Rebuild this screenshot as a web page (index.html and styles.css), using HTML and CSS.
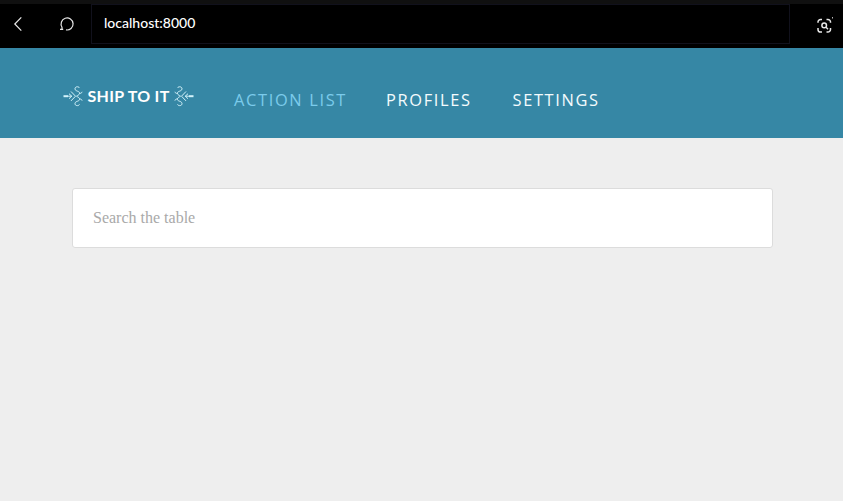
FILE: index.html
```html
<!DOCTYPE html>
<html lang="en">
<head>
<meta charset="utf-8">
<title>Ship To It</title>
<link rel="stylesheet" href="styles.css">
</head>
<body>
<div class="browser">
  <button class="tool back" aria-label="Back"><svg width="10" height="16" viewBox="0 0 10 16"><path d="M8.300 1.300 1.800 8l6.500 6.700"/></svg></button>
  <button class="tool reload" aria-label="Reload"><svg width="16" height="16" viewBox="0 0 16 16"><path d="M7 13.900A6 6 0 1 0 3 11.200v2M1 13.300h3.200"/></svg></button>
  <div class="address">localhost:8000</div>
  <button class="tool lens" aria-label="Visual search"><svg width="18" height="18" viewBox="0 0 18 18"><path d="M2 5.700V5a2.600 2.600 0 0 1 2.600-2.600H6M10.500 2.400h1.400A2.600 2.600 0 0 1 14.500 5v.7M14.500 11v1.400a2.600 2.600 0 0 1-2.600 2.600h-1.400M6 15H4.600A2.600 2.600 0 0 1 2 12.400V11M16 .8h.8"/><circle cx="8.200" cy="8.400" r="2.300"/><path d="m10 10.200 2 2"/></svg></button>
</div>
<header class="site-header">
  <a class="logo">
    <svg class="flourish" width="20" height="24" viewBox="0 0 20 24"><path class="bar" d="M.5 12.200H5"/><path d="M5 12.200h4M6 9.700l2.700 2.500L6 14.700M8 7.500l4.500 4.700L8 16.900M16.500 4c-1-2-4.800-1.500-4.500 1 .3 2.700 5.300 1.800 4.500 4.700-.4 1.300-1.800 1.700-3 2.500M16.500 20.400c-1 2-4.800 1.500-4.500-1 .3-2.700 5.300-1.800 4.500-4.700-.4-1.300-1.800-1.700-3-2.500M16.500 9.500c1.200 0 2.300-.5 2.600-1.700M16.500 14.900c1.200 0 2.300.5 2.600 1.700"/></svg>
    <span class="logo-text">SHIP TO IT</span>
    <svg class="flourish flip" width="20" height="24" viewBox="0 0 20 24"><path class="bar" d="M.5 12.200H5"/><path d="M5 12.200h4M6 9.700l2.700 2.500L6 14.700M8 7.500l4.500 4.700L8 16.900M16.500 4c-1-2-4.800-1.500-4.500 1 .3 2.700 5.300 1.800 4.500 4.700-.4 1.300-1.800 1.700-3 2.500M16.500 20.400c-1 2-4.800 1.500-4.500-1 .3-2.700 5.300-1.800 4.500-4.700-.4-1.300-1.800-1.700-3-2.500M16.500 9.500c1.200 0 2.300-.5 2.600-1.700M16.500 14.900c1.200 0 2.300.5 2.600 1.700"/></svg>
  </a>
  <nav class="nav">
    <a class="active">ACTION LIST</a>
    <a class="profiles">PROFILES</a>
    <a class="settings">SETTINGS</a>
  </nav>
</header>
<main class="content">
  <input class="search" type="text" placeholder="Search the table">
</main>
</body>
</html>
```
FILE: styles.css
```css
* { box-sizing: border-box; }
body { margin: 0; min-height: 501px; background: #eee; }
.browser {
  display: flex;
  align-items: center;
  height: 48px;
  background: #000;
  border-top: 4px solid #101010;
}
.tool { display: flex; align-items: center; justify-content: center; padding: 0; border: 0; background: none; }
.tool svg { fill: none; stroke: #e8e8e8; stroke-width: 1.2; }
.back { width: 36px; padding-bottom: 4px; }
.reload { width: 32px; margin-left: 15px; padding-bottom: 4px; }
.address {
  width: 699px;
  height: 40px;
  margin: 0 0 4px 8px;
  align-self: flex-start;
  padding-left: 12px;
  border: 1px solid #11111c;
  color: #fff;
  font: 500 14px/36px Lato, sans-serif;
  letter-spacing: 0;
}
.lens { width: 18px; margin-left: 26px; }
.lens svg { stroke-width: 1.5; }
.site-header { display: flex; align-items: flex-start; height: 90px; padding-left: 63px; background: #3687a5; }
.logo { display: flex; align-items: center; justify-content: space-between; width: 131px; height: 24px; margin-top: 36px; }
.logo-text { color: #fff; font: 700 16px/24px Lato, sans-serif; letter-spacing: .3px; white-space: nowrap; }
.flourish { fill: none; stroke: #d3f2fa; stroke-width: 1; flex: none; }
.flourish .bar { stroke-width: 2; }
.flip { transform: scaleX(-1); }
.nav { display: flex; margin: 40px 0 0 40px; color: #f4fbfd; font: 400 16.4px/24px "Open Sans", sans-serif; letter-spacing: 1.65px; white-space: nowrap; }
.nav a { width: 126.5px; }
.nav .active { width: 152px; color: #7bcbeb; }
.content { padding: 50px 70px 0 72px; }
.search {
  display: block;
  width: 701px;
  height: 60px;
  padding: 0 20px;
  border: 1px solid #dcdcdc;
  border-radius: 3px;
  background: #fff;
  font: 16px "Liberation Serif", serif;
}
.search::placeholder { color: #a9a9a9; opacity: 1; }
```
